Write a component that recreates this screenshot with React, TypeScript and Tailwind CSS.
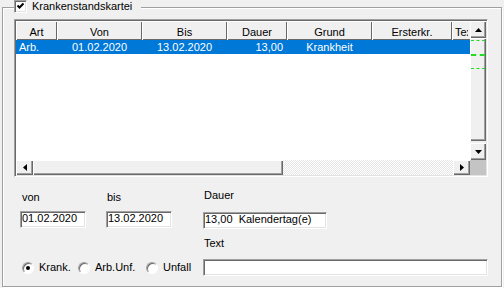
const raised =
  "bg-[#f0f0f0] shadow-[inset_1px_1px_0_#ffffff,inset_-1px_-1px_0_#696969,inset_-2px_-2px_0_#a0a0a0]";
const sunken =
  "bg-white border border-t-[#a0a0a0] border-l-[#a0a0a0] border-r-white border-b-white shadow-[inset_1px_1px_0_#696969,inset_-1px_-1px_0_#e3e3e3]";

const columns = [
  { title: "Art", w: "w-[41px]", head: "text-center", cell: "text-left pl-[3px]", value: "Arb." },
  { title: "Von", w: "w-[85px]", head: "text-center", cell: "text-center", value: "01.02.2020" },
  { title: "Bis", w: "w-[85px]", head: "text-center", cell: "text-center", value: "13.02.2020" },
  { title: "Dauer", w: "w-[60px]", head: "text-center", cell: "text-right pr-[4px]", value: "13,00" },
  { title: "Grund", w: "w-[85px]", head: "text-center", cell: "text-center", value: "Krankheit" },
  { title: "Ersterkr.", w: "w-[80px]", head: "text-center", cell: "text-center", value: "" },
  { title: "Text", w: "w-[60px]", head: "text-left pl-[3px]", cell: "text-left", value: "" },
];

const Arrow = ({ dir }: { dir: "up" | "down" | "left" | "right" }) => {
  const pts = {
    up: "3.5,0 7,4 0,4",
    down: "0,0 7,0 3.5,4",
    left: "4,0 4,7 0,3.5",
    right: "0,0 4,3.5 0,7",
  }[dir];
  const vertical = dir === "up" || dir === "down";
  return (
    <svg width={vertical ? 7 : 4} height={vertical ? 4 : 7} viewBox={vertical ? "0 0 7 4" : "0 0 4 7"}>
      <polygon points={pts} fill="#000" />
    </svg>
  );
};

const Radio = ({ label, checked, w }: { label: string; checked?: boolean; w: string }) => (
  <div className={`flex items-center gap-[5px] ${w}`}>
    <div className="flex h-[12px] w-[12px] items-center justify-center rounded-full bg-white border border-t-[#a0a0a0] border-l-[#a0a0a0] border-r-white border-b-white shadow-[inset_1px_1px_0_#696969]">
      {checked && <div className="h-[4px] w-[4px] rounded-full bg-black" />}
    </div>
    <span>{label}</span>
  </div>
);

export default function App() {
  return (
    <div className="h-[288px] w-[504px] overflow-hidden bg-[#f0f0f0] pl-[2px] pt-[7px] font-['Liberation_Sans',Arial,sans-serif] text-[11px] leading-[13px] text-black">
      <div className="relative h-[280px] w-[500px] border border-[#a0a0a0] shadow-[inset_1px_1px_0_#ffffff,1px_1px_0_#ffffff]">
        {/* Titel mit Checkbox */}
        <div className="absolute left-[11px] top-[-8px] flex items-start gap-[5px] bg-[#f0f0f0] pr-[9px]">
          <div className={`flex h-[13px] w-[13px] items-center justify-center ${sunken}`}>
            <svg width="9" height="9" viewBox="0 0 9 9">
              <polyline points="1.5,3.5 3.5,5.5 7.5,1.5" fill="none" stroke="#000" strokeWidth="2" />
            </svg>
          </div>
          <span>Krankenstandskartei</span>
        </div>

        {/* Tabelle */}
        <div className="ml-[11px] mt-[11px] h-[158px] w-[474px] border border-t-[#a0a0a0] border-l-[#a0a0a0] border-r-white border-b-white shadow-[inset_1px_1px_0_#696969,inset_-1px_-1px_0_#e3e3e3] p-px">
          <div className="flex h-[139px]">
            <div className="flex w-[454px] flex-col overflow-hidden bg-white">
              <div className="flex h-[19px] shrink-0">
                {columns.map((c) => (
                  <div
                    key={c.title}
                    className={`${c.w} ${c.head} shrink-0 whitespace-nowrap bg-[#f0f0f0] pt-[5px] shadow-[inset_1px_1px_0_#ffffff,inset_-1px_-1px_0_#696969]`}
                  >
                    {c.title === "Text" ? (
                      <span className="block w-[13px] overflow-hidden">{c.title}</span>
                    ) : (
                      c.title
                    )}
                  </div>
                ))}
              </div>
              <div className="flex h-[14px] shrink-0 bg-[#0078d7] text-white">
                {columns.map((c) => (
                  <div key={c.title} className={`${c.w} ${c.cell} shrink-0 whitespace-nowrap pt-px`}>
                    {c.value}
                  </div>
                ))}
              </div>
            </div>
            <div className="flex w-[16px] flex-col">
              <div className={`flex h-[17px] items-center justify-center ${raised}`}>
                <Arrow dir="up" />
              </div>
              <div className={`relative h-[103px] ${raised}`}>
                <div className="absolute left-px right-px top-[2px] border-t border-dashed border-[#22dd22]" />
                <div className="absolute left-px right-px top-[16px] border-t-2 border-dashed border-[#22dd22]" />
                <div className="absolute left-px right-px top-[30px] border-t border-dashed border-[#22dd22]" />
              </div>
              <div className="h-[2px] bg-[#f0f0f0]" />
              <div className={`flex h-[17px] items-center justify-center ${raised}`}>
                <Arrow dir="down" />
              </div>
            </div>
          </div>
          <div className="flex h-[15px]">
            <div className={`flex w-[17px] items-center justify-center ${raised}`}>
              <Arrow dir="left" />
            </div>
            <div className="flex w-[420px] bg-[repeating-conic-gradient(#ffffff_0%_25%,#e6e6e6_0%_50%)] bg-[length:2px_2px]">
              <div className={`w-[250px] ${raised}`} />
            </div>
            <div className={`flex w-[17px] items-center justify-center ${raised}`}>
              <Arrow dir="right" />
            </div>
            <div className="w-[16px] bg-[#c4c4c4]" />
          </div>
        </div>

        {/* Eingabefelder */}
        <div className="ml-[17px] mt-[12px] flex items-start">
          <div className="w-[66px] pt-[2px]">
            <div className="pl-[2px]">von</div>
            <div className={`mt-[7px] h-[17px] pl-px ${sunken}`}>01.02.2020</div>
          </div>
          <div className="ml-[20px] w-[66px] pt-[2px]">
            <div className="pl-px">bis</div>
            <div className={`mt-[7px] h-[17px] pl-px ${sunken}`}>13.02.2020</div>
          </div>
          <div className="ml-[31px] w-[124px]">
            <div className="pl-px">Dauer</div>
            <div className={`mt-[10px] h-[17px] pl-px ${sunken}`}>13,00&nbsp;&nbsp;Kalendertag(e)</div>
          </div>
        </div>

        <div className="ml-[201px] mt-[8px]">Text</div>

        <div className="mt-[9px] flex items-center">
          <div className="ml-[19px] flex w-[181px] items-center">
            <Radio label="Krank." checked w="w-[56px]" />
            <Radio label="Arb.Unf." w="w-[68px]" />
            <Radio label="Unfall" w="w-[57px]" />
          </div>
          <div className={`h-[17px] w-[285px] ${sunken}`} />
        </div>
      </div>
    </div>
  );
}
